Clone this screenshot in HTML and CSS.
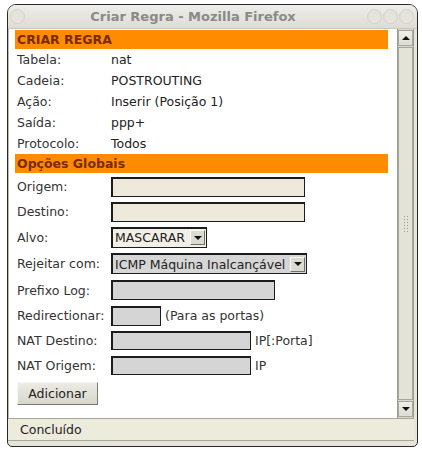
FILE: index.html
```html
<!DOCTYPE html>
<html lang="pt">
  <head>
    <meta charset="UTF-8" />
    <title>Criar Regra</title>
    <link rel="stylesheet" href="styles.css">
  </head>
  <body>
    <div class="window">
      <div class="titlebar">
        <span class="dot"></span>
        <span class="title">Criar Regra - Mozilla Firefox</span>
        <span class="dots"><span class="dot"></span><span class="dot"></span><span class="dot"></span></span>
      </div>

      <div class="main">
        <div class="page">
          <div class="head">CRIAR REGRA</div>
          <div class="info">
            <span>Tabela:</span><span>nat</span>
            <span>Cadeia:</span><span>POSTROUTING</span>
            <span>Ação:</span><span>Inserir (Posição 1)</span>
            <span>Saída:</span><span>ppp+</span>
            <span>Protocolo:</span><span>Todos</span>
          </div>

          <div class="head">Opções Globais</div>
          <div class="form">
            <div class="row r-origem">
              <label>Origem:</label>
              <input type="text" class="field beige w194">
            </div>
            <div class="row r-destino">
              <label>Destino:</label>
              <input type="text" class="field beige w194">
            </div>
            <div class="row r-alvo">
              <label>Alvo:</label>
              <span class="select light">
                <select><option>MASCARAR</option></select>
                <span class="arrow"></span>
              </span>
            </div>
            <div class="row r-rejeitar">
              <label>Rejeitar com:</label>
              <span class="select gray">
                <select><option>ICMP Máquina Inalcançável</option></select>
                <span class="arrow"></span>
              </span>
            </div>
            <div class="row r-prefixo">
              <label>Prefixo Log:</label>
              <input type="text" class="field grey w164">
            </div>
            <div class="row r-redir">
              <label>Redirectionar:</label>
              <input type="text" class="field grey w49">
              <span class="hint">(Para as portas)</span>
            </div>
            <div class="row r-natd">
              <label>NAT Destino:</label>
              <input type="text" class="field grey w140">
              <span class="hint">IP[:Porta]</span>
            </div>
            <div class="row r-nato">
              <label>NAT Origem:</label>
              <input type="text" class="field grey w140">
              <span class="hint">IP</span>
            </div>
            <button class="add">Adicionar</button>
          </div>
        </div>

        <div class="scrollbar">
          <div class="sbtn"><span class="up"></span></div>
          <div class="thumb"><span class="grip"></span></div>
          <div class="sbtn"><span class="down"></span></div>
        </div>
      </div>

      <div class="status">Concluído</div>
    </div>
  </body>
</html>
```

FILE: styles.css
```css
body {
  margin: 0;
  background: #fff;
  font-family: "DejaVu Sans", sans-serif;
  font-size: 12.5px;
  color: #222;
}
.window {
  margin: 4px 0 0 7px;
  width: 409px;
  height: 441px;
  border: 1px solid #2a2a2a;
  border-radius: 9px 9px 5px 5px;
  background: #e6e5da;
  display: flex;
  flex-direction: column;
  overflow: hidden;
}
.titlebar {
  height: 23px;
  display: flex;
  align-items: center;
  padding: 0 3px 0 2px;
  background: linear-gradient(#ededea, #dedcd4);
}
.title {
  flex: 1;
  text-align: center;
  font-weight: bold;
  font-size: 13px;
  color: #8a8a86;
  padding-right: 6px;
}
.dot {
  display: inline-block;
  width: 13px;
  height: 13px;
  border-radius: 50%;
  border: 1px solid #d2d1ca;
  background: #e4e3dc;
}
.dots {
  display: flex;
  gap: 1px;
}
.main {
  display: flex;
  height: 389px;
  border-top: 1px solid #c8c7bc;
}
.page {
  flex: 1;
  background: #fff;
  padding: 1px 9px 0 6px;
  border-left: 1px solid #bdbcb0;
}
.head {
  background: #ff8c00;
  color: #7a2a00;
  font-weight: bold;
  font-size: 12.5px;
  height: 19px;
  line-height: 19px;
  padding-left: 2px;
}
.info {
  display: grid;
  grid-template-columns: 94px auto;
  grid-auto-rows: 21px;
  align-items: center;
  padding: 0 2px;
}
.info span:nth-child(odd) {
  color: #333;
}
.form {
  padding: 1px 2px 0;
}
.row {
  display: flex;
  align-items: center;
  height: 25px;
}
.row label {
  width: 94px;
  flex: none;
  color: #333;
}
.r-alvo {
  height: 26px;
}
.r-rejeitar {
  height: 27px;
}
.r-prefixo {
  height: 26px;
}
.field {
  box-sizing: border-box;
  height: 20px;
  margin: 0;
  padding: 0 3px;
  border: 1px solid #1c1c1c;
  border-top-width: 2px;
  border-left-width: 2px;
  font: inherit;
}
.r-natd .field,
.r-nato .field {
  height: 19px;
}
.beige {
  background: #eeeadb;
}
.grey {
  background: #d5d5d5;
}
.w194 { width: 194px; }
.w164 { width: 164px; }
.w49 { width: 50px; }
.w140 { width: 140px; }
.hint {
  margin-left: 4px;
  color: #333;
}
.select {
  display: inline-flex;
  align-items: center;
  box-sizing: border-box;
  height: 21px;
  border: 1px solid #1c1c1c;
  border-top-width: 2px;
  border-left-width: 2px;
  padding-right: 1px;
}
.select select {
  appearance: none;
  -webkit-appearance: none;
  border: none;
  background: transparent;
  font: inherit;
  color: #222;
  padding: 0 0 0 2px;
  margin: 0;
  height: 18px;
}
.light {
  width: 96px;
  background: #f1efe6;
}
.light select {
  width: 76px;
}
.gray {
  width: 196px;
  background: #d6d6d6;
}
.gray select {
  width: 178px;
}
.arrow {
  box-sizing: border-box;
  width: 15px;
  height: 15px;
  margin-left: auto;
  background: #dcdbd2;
  border: 1px solid;
  border-color: #fafaf6 #6f6e68 #6f6e68 #fafaf6;
  display: flex;
  align-items: center;
  justify-content: center;
}
.arrow::after {
  content: "";
  border-left: 4px solid transparent;
  border-right: 4px solid transparent;
  border-top: 4px solid #111;
}
.add {
  margin-top: 4px;
  width: 81px;
  height: 23px;
  font: inherit;
  font-size: 12.5px;
  color: #222;
  background: linear-gradient(#ecebe4, #d8d7cc);
  border: 1px solid;
  border-color: #f6f6f2 #7b7a72 #7b7a72 #f6f6f2;
  padding: 0;
}
.scrollbar {
  width: 15px;
  flex: none;
  background: #d9d8cc;
  border-left: 1px solid #9e9d93;
  border-right: 1px solid #9e9d93;
  display: flex;
  flex-direction: column;
  padding: 1px 0;
  margin-right: 3px;
}
.sbtn {
  height: 14px;
  background: linear-gradient(#f0efe8, #dddcd2);
  border: 1px solid #a8a79c;
  display: flex;
  align-items: center;
  justify-content: center;
}
.up {
  border-left: 4px solid transparent;
  border-right: 4px solid transparent;
  border-bottom: 4px solid #111;
}
.down {
  border-left: 4px solid transparent;
  border-right: 4px solid transparent;
  border-top: 4px solid #111;
}
.thumb {
  flex: 1;
  margin: 1px 0;
  background: #e4e3d8;
  border: 1px solid #a8a79c;
  display: flex;
  align-items: center;
  justify-content: center;
}
.grip {
  width: 6px;
  height: 18px;
  background-image: radial-gradient(#9b9a90 0.8px, transparent 1px);
  background-size: 3px 3px;
}
.status {
  flex: 1;
  margin: 0 3px 5px 0;
  border-top: 1px solid #a8a79c;
  border-bottom: 1px solid #a8a79c;
  background: #ecebdc;
  padding-left: 12px;
  display: flex;
  align-items: center;
  font-size: 12.5px;
  color: #222;
}
```
